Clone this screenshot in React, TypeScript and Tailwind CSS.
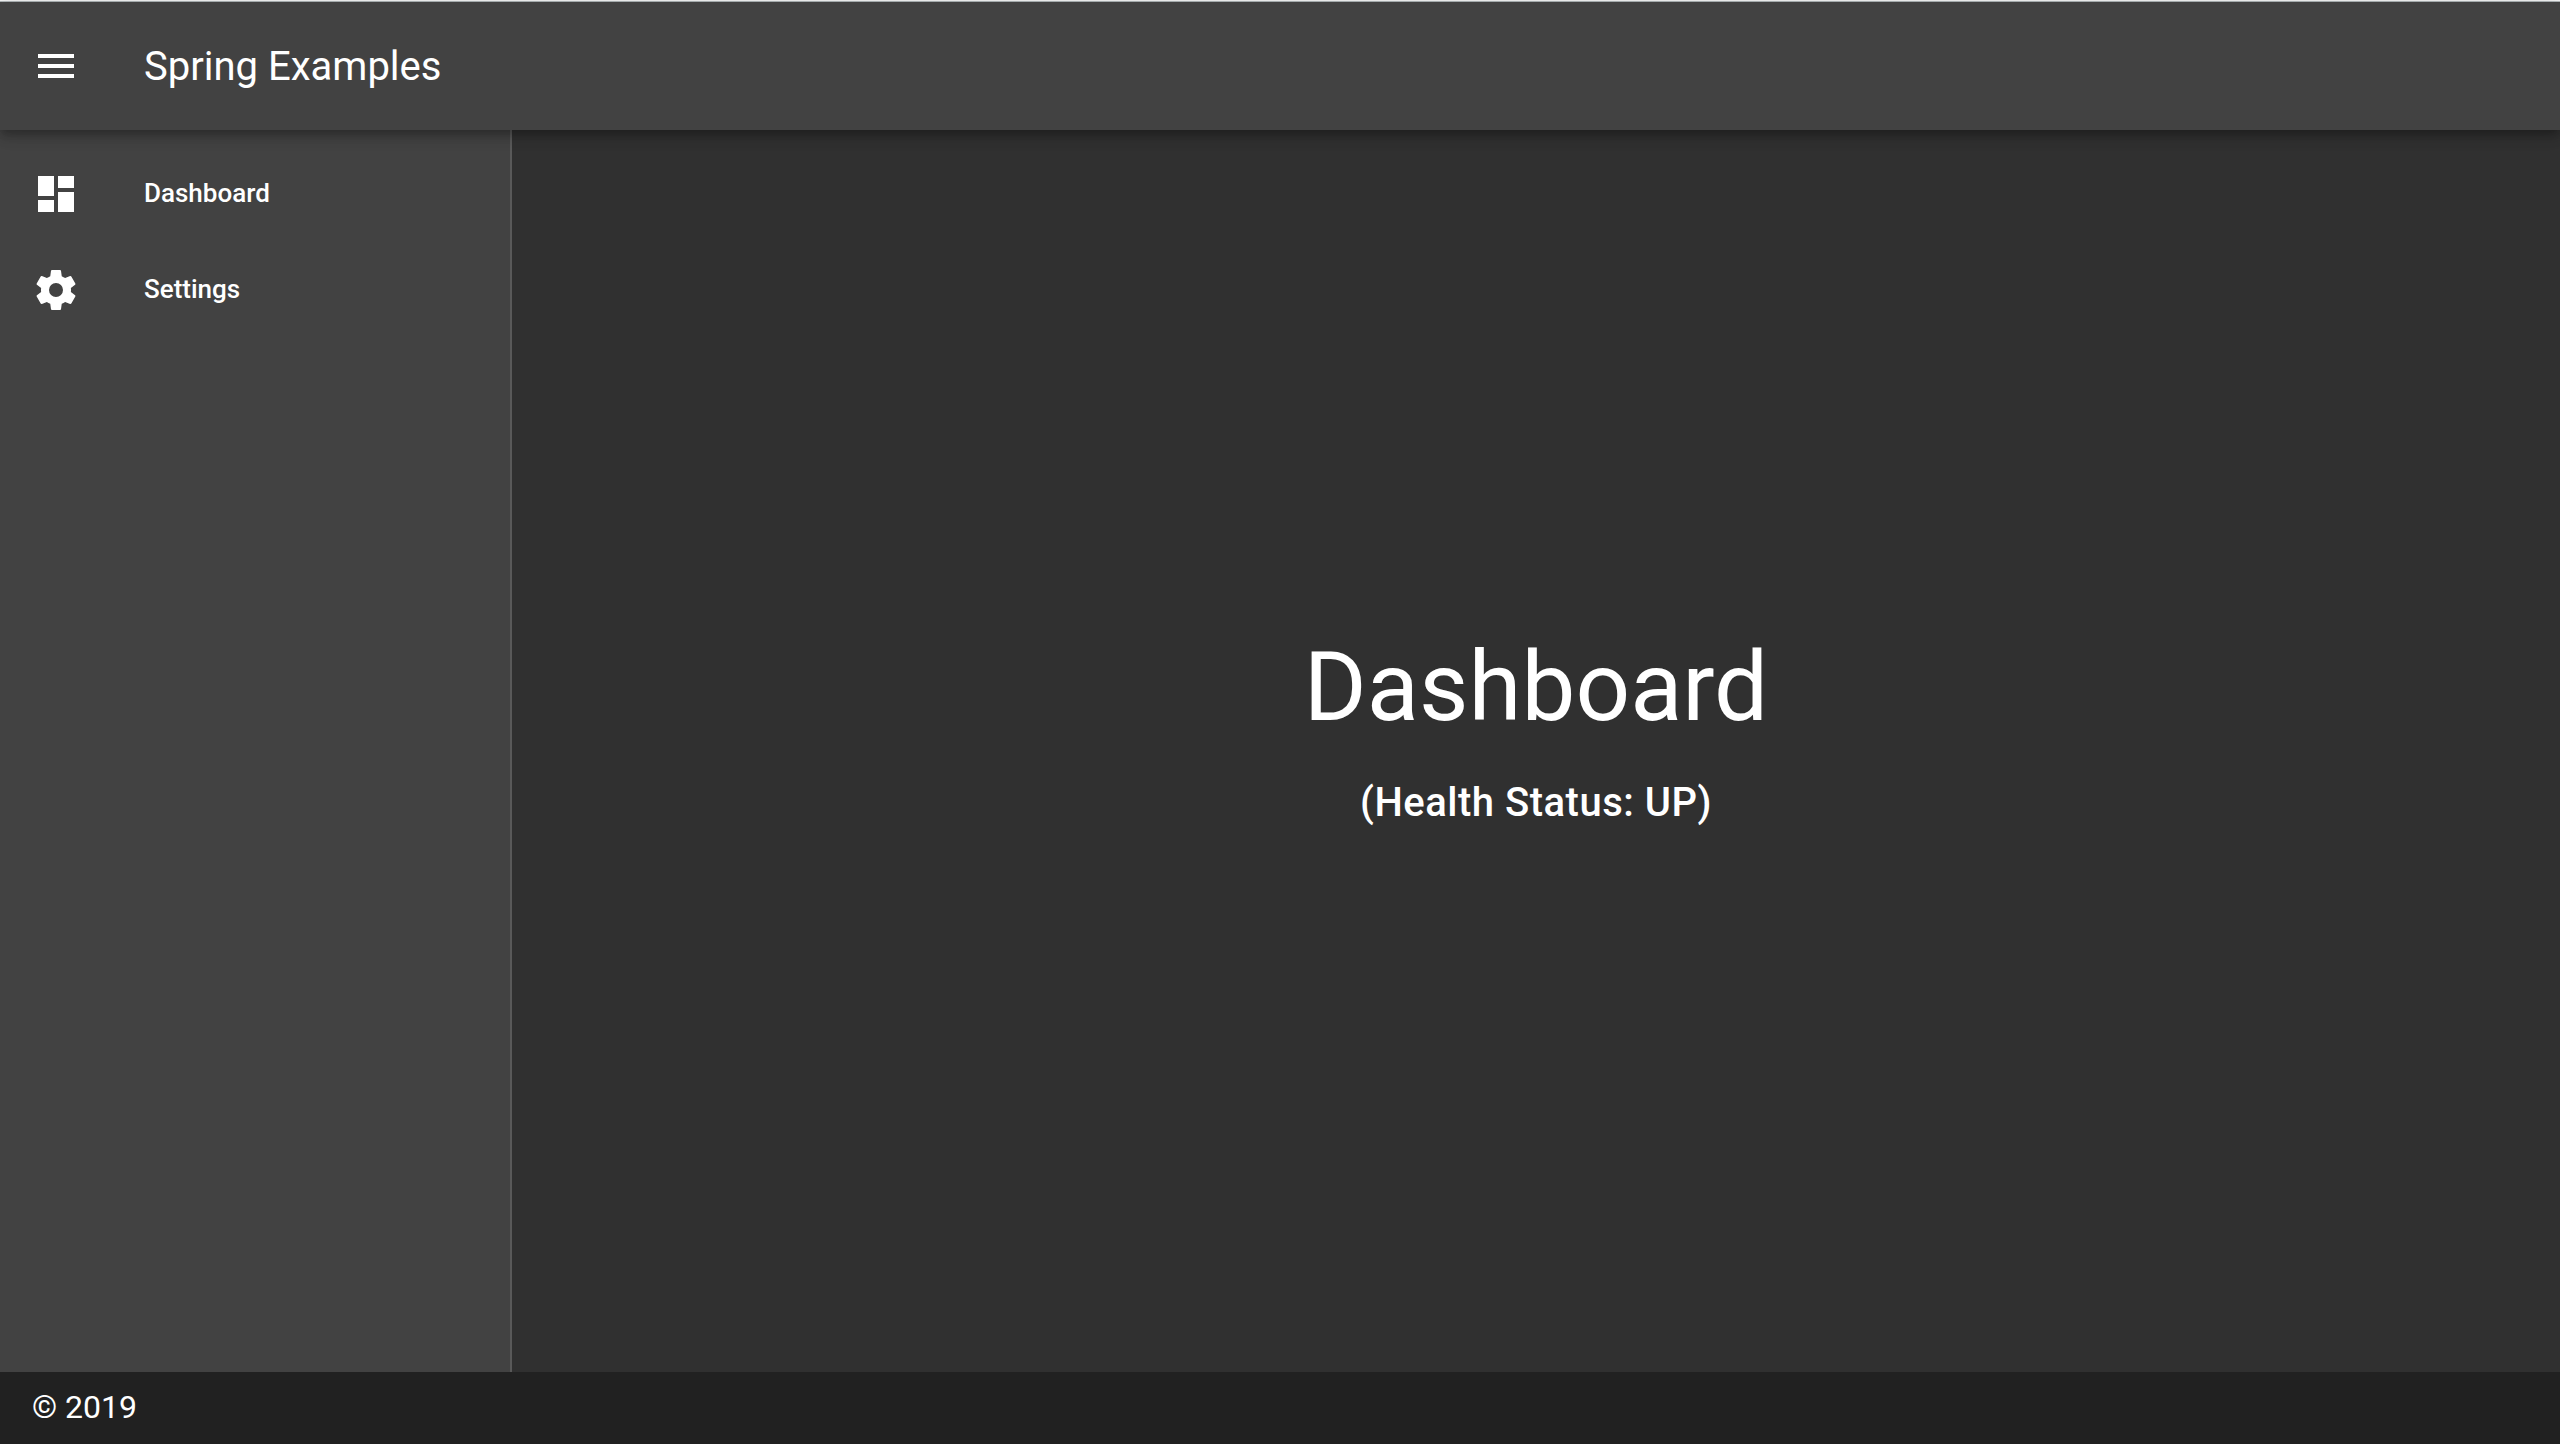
const font = "font-['Roboto',sans-serif]";

function Icon({ d }: { d: string }) {
  return (
    <svg viewBox="0 0 24 24" className="size-12 shrink-0 fill-white">
      <path d={d} />
    </svg>
  );
}

const items = [
  { label: "Dashboard", d: "M13,3V9H21V3M13,21H21V11H13M3,21H11V15H3M3,13H11V3H3V13Z" },
  {
    label: "Settings",
    d: "M12,15.5A3.5,3.5 0 0,1 8.5,12A3.5,3.5 0 0,1 12,8.5A3.5,3.5 0 0,1 15.5,12A3.5,3.5 0 0,1 12,15.5M19.43,12.97C19.47,12.65 19.5,12.33 19.5,12C19.5,11.67 19.47,11.34 19.43,11L21.54,9.37C21.73,9.22 21.78,8.95 21.66,8.73L19.66,5.27C19.54,5.05 19.27,4.96 19.05,5.05L16.56,6.05C16.04,5.66 15.5,5.32 14.87,5.07L14.5,2.42C14.46,2.18 14.25,2 14,2H10C9.75,2 9.54,2.18 9.5,2.42L9.13,5.07C8.5,5.32 7.96,5.66 7.44,6.05L4.95,5.05C4.73,4.96 4.46,5.05 4.34,5.27L2.34,8.73C2.21,8.95 2.27,9.22 2.46,9.37L4.57,11C4.53,11.34 4.5,11.67 4.5,12C4.5,12.33 4.53,12.65 4.57,12.97L2.46,14.63C2.27,14.78 2.21,15.05 2.34,15.27L4.34,18.73C4.46,18.95 4.73,19.03 4.95,18.95L7.44,17.94C7.96,18.34 8.5,18.68 9.13,18.93L9.5,21.58C9.54,21.82 9.75,22 10,22H14C14.25,22 14.46,21.82 14.5,21.58L14.87,18.93C15.5,18.67 16.04,18.34 16.56,17.94L19.05,18.95C19.27,19.03 19.54,18.95 19.66,18.73L21.66,15.27C21.78,15.05 21.73,14.78 21.54,14.63L19.43,12.97Z",
  },
];

export default function App() {
  return (
    <div className={`flex h-[1444px] w-[2560px] flex-col overflow-hidden bg-[#303030] text-white ${font}`}>
      <div className="h-px shrink-0 bg-[#f4f5f5]" />
      <div className="h-px shrink-0 bg-[#b0b6b8]" />
      <header className="relative z-10 flex h-32 shrink-0 items-center bg-[#424242] pl-8 shadow-[0_4px_8px_-2px_rgba(0,0,0,0.2),0_8px_10px_0_rgba(0,0,0,0.14),0_2px_20px_0_rgba(0,0,0,0.12)]">
        <Icon d="M3,6H21V8H3V6M3,11H21V13H3V11M3,16H21V18H3V16Z" />
        <h1 className="pt-0.5 pl-16 text-[40px] leading-[60px]">Spring Examples</h1>
      </header>
      <div className="flex min-h-0 flex-1">
        <nav className="w-[512px] shrink-0 border-r-2 border-[#595959] bg-[#424242] pt-6">
          {items.map((item) => (
            <a key={item.label} className="mb-4 flex h-20 items-center pl-8">
              <Icon d={item.d} />
              <span className="pb-0.5 pl-16 text-[26px] leading-8 font-medium">{item.label}</span>
            </a>
          ))}
        </nav>
        <main className="flex flex-1 flex-col items-center justify-center pb-7">
          <h2 className="text-[96px] leading-[96px]">Dashboard</h2>
          <p className="mt-9 text-[40px] leading-[64px] font-medium tracking-[0.5px]">(Health Status: UP)</p>
        </main>
      </div>
      <footer className="flex h-[72px] shrink-0 items-center bg-[#212121] pb-0.5 pl-8 text-[32px] leading-[48px]">© 2019</footer>
    </div>
  );
}
